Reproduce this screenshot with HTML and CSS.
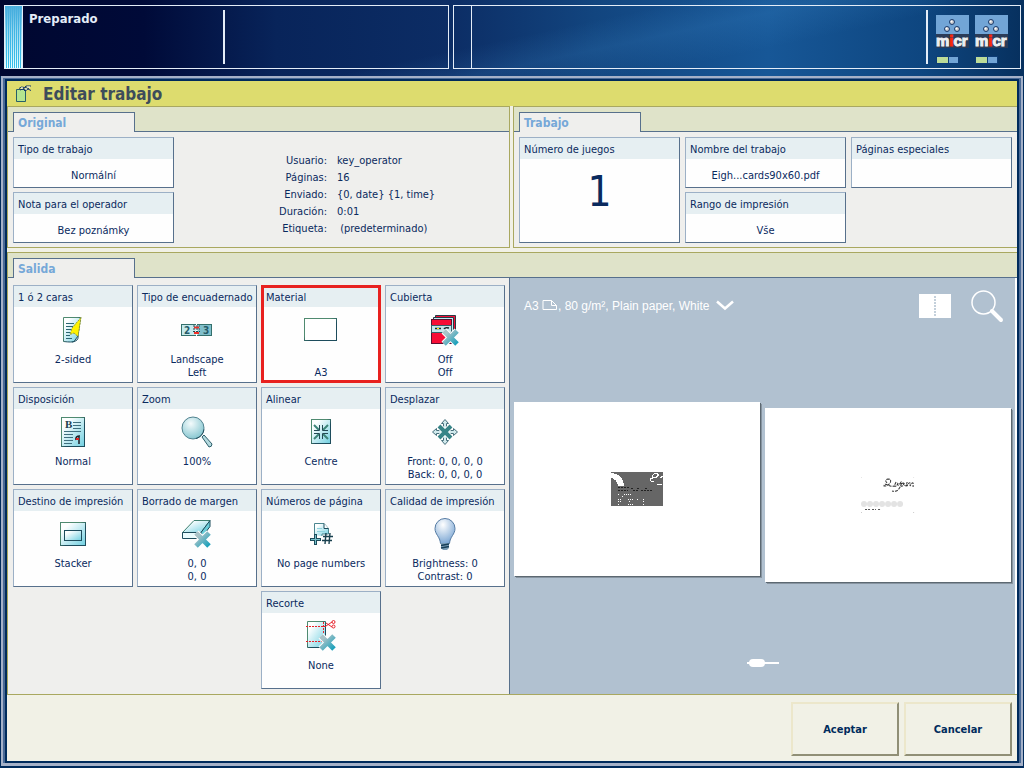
FILE: index.html
```html
<!DOCTYPE html>
<html lang="es">
<head>
<meta charset="utf-8">
<title>Editar trabajo</title>
<meta name="viewport" content="width=device-width, initial-scale=1">
<link rel="stylesheet" href="styles.css">
</head>
<body>
<svg class="defs" width="0" height="0" aria-hidden="true">
  <defs>
    <linearGradient id="paper" x1="0" y1="0" x2="1" y2="1"><stop offset="0.2" stop-color="#fdffff"/><stop offset="1" stop-color="#6fcfe0"/></linearGradient>
    <linearGradient id="cross" x1="0" y1="0" x2="1" y2="1"><stop offset="0.2" stop-color="#a9c3c8"/><stop offset="1" stop-color="#16a0bb"/></linearGradient>
    <linearGradient id="edge" x1="0" y1="0" x2="1" y2="1"><stop offset="0.4" stop-color="#4f8a70"/><stop offset="0.6" stop-color="#1d4c5c"/></linearGradient>
    <radialGradient id="lens" cx="0.4" cy="0.3" r="0.8"><stop offset="0" stop-color="#f4fbfc"/><stop offset="1" stop-color="#79c0cb"/></radialGradient>
    <radialGradient id="bulb" cx="0.4" cy="0.25" r="0.8"><stop offset="0" stop-color="#ffffff"/><stop offset="1" stop-color="#76a3d2"/></radialGradient>
    <g id="x-mark">
      <path d="M2 2L15 15M15 2L2 15" stroke="#fff" stroke-width="7"/>
      <path d="M2 2L15 15M15 2L2 15" stroke="url(#cross)" stroke-width="5"/>
    </g>
    <g id="dots">
      <g fill="#c6c8cc" stroke="#17396c"><circle cx="16" cy="7" r="2.5"/><circle cx="11" cy="14" r="2.5"/><circle cx="21" cy="14" r="2.5"/></g>
      <g fill="#fff"><circle cx="15.5" cy="6.5" r="1"/><circle cx="10.5" cy="13.5" r="1"/><circle cx="20.5" cy="13.5" r="1"/></g>
    </g>
  </defs>
</svg>

<header class="status">
  <section class="status-box status-main">
    <span class="stripes"></span>
    <p class="state">Preparado</p>
    <span class="divider"></span>
  </section>
  <section class="status-box status-info">
    <span class="rail"></span>
    <span class="divider"></span>
    <div class="toners">
      <div class="toner">
        <svg width="33" height="19" viewBox="0 0 33 19" aria-hidden="true"><use href="#dots"/></svg>
        <span class="toner-name">m<b>i</b>cr</span>
        <span class="level"></span>
      </div>
      <div class="toner">
        <svg width="33" height="19" viewBox="0 0 33 19" aria-hidden="true"><use href="#dots"/></svg>
        <span class="toner-name">m<b>i</b>cr</span>
        <span class="level"></span>
      </div>
    </div>
  </section>
</header>

<main class="window">
  <div class="window-inner">
    <div class="titlebar">
      <svg width="18" height="18" viewBox="0 0 18 18" aria-hidden="true">
        <path d="M1.5 4.5h9v12h-9z" fill="#b5e58f" stroke="#265f69"/>
        <path d="M4 3.500l2.500-1.500 3 .5 1.500-1.500h5M5 5l3-1 2 2 3-2 3 1.500M8 4l2-1.500 4 1" fill="none" stroke="#12356b"/>
        <path d="M6 3h2M10 4h2M12 2h3" stroke="#fff"/>
      </svg>
      <h1>Editar trabajo</h1>
    </div>

    <div class="top-row">
      <section class="panel">
        <div class="tabbar"><h2 class="tab">Original</h2></div>
        <div class="panel-body original">
          <div class="stack">
            <button class="tile"><span class="tile-head">Tipo de trabajo</span><span class="tile-value">Normální</span></button>
            <button class="tile"><span class="tile-head">Nota para el operador</span><span class="tile-value">Bez poznámky</span></button>
          </div>
          <dl class="info">
            <dt>Usuario:</dt><dd>key_operator</dd>
            <dt>Páginas:</dt><dd>16</dd>
            <dt>Enviado:</dt><dd>{0, date} {1, time}</dd>
            <dt>Duración:</dt><dd>0:01</dd>
            <dt>Etiqueta:</dt><dd>&nbsp;(predeterminado)</dd>
          </dl>
        </div>
      </section>
      <section class="panel">
        <div class="tabbar"><h2 class="tab">Trabajo</h2></div>
        <div class="panel-body job">
          <button class="tile tile-count"><span class="tile-head">Número de juegos</span><span class="count">1</span></button>
          <button class="tile"><span class="tile-head">Nombre del trabajo</span><span class="tile-value">Eigh...cards90x60.pdf</span></button>
          <button class="tile"><span class="tile-head">Páginas especiales</span></button>
          <button class="tile"><span class="tile-head">Rango de impresión</span><span class="tile-value">Vše</span></button>
        </div>
      </section>
    </div>

    <section class="panel output">
      <div class="tabbar"><h2 class="tab">Salida</h2></div>
      <div class="output-body">
        <div class="options">
          <button class="tile option"><span class="tile-head">1 ó 2 caras</span>
            <span class="icon"><svg width="22" height="28" viewBox="0 0 22 28">
              <path d="M1.500 1.500H18.500L16 20l-4 5.500q-2 1-10.500 0z" fill="url(#paper)" stroke="url(#edge)"/>
              <path d="M4 7.500h8M4 10.500h7M4 13.500h6M4 16.500h4M4 19.500h4M4 22.500h6" stroke="#2b6571"/>
              <path d="M19 1.500L10 12l-2 6.500 4-1.500 4 3.500z" fill="#fff200" stroke="#8d9a3c" stroke-dasharray="2 1"/>
              <path d="M16 20q1 5-6 6" fill="none" stroke="#1c5060"/></svg></span>
            <span class="text">2-sided</span></button>
          <button class="tile option"><span class="tile-head">Tipo de encuadernado</span>
            <span class="icon"><svg width="32" height="14" viewBox="0 0 32 14">
              <rect x="0.500" y="1.500" width="30" height="11" fill="#c4e9ec" stroke="#34706c"/><rect x="17" y="2" width="13" height="10" fill="#80bfcb"/>
              <path d="M15.500 0v14" stroke="#fff"/>
              <path d="M13 4.500h5M13 10h5" stroke="#f03028" stroke-width="2"/><path d="M12 3h7M12 6h7M12 8.500h7" stroke="#28444c" stroke-dasharray="2 1"/>
              <text class="spine-no" x="3" y="11">2</text><text class="spine-no" x="22" y="11">3</text></svg></span>
            <span class="text">Landscape<br>Left</span></button>
          <button class="tile option selected"><span class="tile-head">Material</span>
            <span class="icon"><svg width="34" height="24" viewBox="0 0 34 24"><rect x="0.500" y="0.500" width="32" height="22" fill="#fff" stroke="url(#edge)"/></svg></span>
            <span class="text"><br>A3</span></button>
          <button class="tile option"><span class="tile-head">Cubierta</span>
            <span class="icon"><svg width="30" height="32" viewBox="0 0 30 32">
              <path d="M5.500 4V1.500H25.500V22" fill="#f70d36" stroke="#253c46"/>
              <path d="M3.500 6V3.500H23.500V24H4" fill="#bfeaf0" stroke="#253c46"/>
              <rect x="1.500" y="5.500" width="20" height="24" fill="#f70d36" stroke="#5b1030"/>
              <rect x="1.500" y="11.500" width="20" height="7" fill="#c7e7ec" stroke="#34616a"/>
              <path d="M5 14.500h6M14 15q1-2 5-1" fill="none" stroke="#16242b" stroke-width="1.500"/><rect x="7" y="14" width="2" height="1" fill="#fff200"/>
              <use href="#x-mark" x="12" y="15"/></svg></span>
            <span class="text">Off<br>Off</span></button>

          <button class="tile option"><span class="tile-head">Disposición</span>
            <span class="icon"><svg width="26" height="32" viewBox="0 0 26 32">
              <rect x="1.500" y="1.500" width="23" height="29" fill="url(#paper)" stroke="url(#edge)"/>
              <text class="serif-b" x="5" y="12">B</text>
              <path d="M13 6.500h8M13 9.500h8M13 12.500h8M4 15.500h17M4 18.500h9M4 21.500h9M4 24.500h9M4 27.500h8" stroke="#3f6f7e"/>
              <path d="M16 24q-1-4 4-4M19 28v-7" fill="none" stroke="#1d1d24" stroke-width="1.500"/><path d="M16 22h3v2h-3z" fill="#e32020"/></svg></span>
            <span class="text">Normal</span></button>
          <button class="tile option"><span class="tile-head">Zoom</span>
            <span class="icon"><svg width="32" height="34" viewBox="0 0 32 34">
              <path d="M21 22l2-2 8 9q0 3-3 3z" fill="#b4d9de" stroke="#2d5f6b"/>
              <circle cx="12" cy="13" r="11" fill="url(#lens)" stroke="#51828f"/><path d="M15 23.500a11 11 0 0 0 8-9" fill="none" stroke="#24505e"/></svg></span>
            <span class="text">100%</span></button>
          <button class="tile option"><span class="tile-head">Alinear</span>
            <span class="icon"><svg width="22" height="28" viewBox="0 0 22 28">
              <rect x="1.500" y="1.500" width="19" height="24" fill="url(#paper)" stroke="url(#edge)"/>
              <path d="M4 7l5 5M18 7l-5 5M4 21l5-5M18 21l-5-5" stroke="#3d8579" stroke-width="2"/>
              <path d="M9.500 7v5.500H4M12.500 7v5.500H18M9.500 21v-5.500H4M12.500 21v-5.500H18" fill="none" stroke="#244a55"/></svg></span>
            <span class="text">Centre</span></button>
          <button class="tile option"><span class="tile-head">Desplazar</span>
            <span class="icon"><svg width="28" height="28" viewBox="0 0 28 28">
              <path d="M12.500 10V5.500H10.500L14 1.500l3.500 4H15.500V10M12.500 18v4.500H10.500L14 26.500l3.500-4H15.500V18M10 12.500H5.500V10.500L1.500 14l4 3.500V15.500H10M18 12.500h4.500V10.500L26.500 14l-4 3.500V15.500H18" fill="#d2eaed" stroke="#47707c"/>
              <path d="M8 8l12 12M20 8L8 20" stroke="#fff" stroke-width="6"/><path d="M8 8l12 12M20 8L8 20" stroke="#378487" stroke-width="4"/></svg></span>
            <span class="text">Front: 0, 0, 0, 0<br>Back: 0, 0, 0, 0</span></button>

          <button class="tile option"><span class="tile-head">Destino de impresión</span>
            <span class="icon"><svg width="28" height="26" viewBox="0 0 28 26">
              <rect x="1.500" y="1.500" width="25" height="23" fill="url(#paper)" stroke="url(#edge)"/>
              <rect x="5.500" y="9.500" width="17" height="10" fill="url(#paper)" stroke="#1d4c5c"/></svg></span>
            <span class="text">Stacker</span></button>
          <button class="tile option"><span class="tile-head">Borrado de margen</span>
            <span class="icon"><svg width="32" height="30" viewBox="0 0 32 30">
              <path d="M1.500 13.500L13 1.500h16L20 13.500z" fill="url(#paper)" stroke="#3f8070"/>
              <path d="M20 13.500l9-12v6l-9 12z" fill="#69cdd9" stroke="#1d4c5c"/>
              <path d="M1.500 13.500H20v6H1.500z" fill="#e9fbfd" stroke="#1d4c5c"/>
              <use href="#x-mark" x="13" y="12"/></svg></span>
            <span class="text">0, 0<br>0, 0</span></button>
          <button class="tile option"><span class="tile-head">Números de página</span>
            <span class="icon"><svg width="24" height="24" viewBox="0 0 24 24">
              <path d="M5.500 13V1.500H15l4.500 5V12H13v2" fill="url(#paper)" stroke="#4b8690"/><path d="M15 1.500v5h4.500" fill="#fff" stroke="#1d4c5c"/><path d="M8 6.500h5M8 9.500h8" stroke="#8fd3de"/>
              <path d="M1 17.500h11M6.500 12v11" stroke="#1d4c5c" stroke-width="3"/><path d="M2 17.500h9M6.500 13v9" stroke="#74bfc9"/>
              <path d="M17 11l-1 11M21 11l-1 11M14 14.500h10M13 18.500h10" stroke="#19414f" stroke-width="1.400"/></svg></span>
            <span class="text">No page numbers</span></button>
          <button class="tile option"><span class="tile-head">Calidad de impresión</span>
            <span class="icon"><svg width="22" height="32" viewBox="0 0 22 32">
              <path d="M11 .5a10 10 0 0 1 10 10c0 6-5 8-5.500 15h-9C6 18.500 1 16.500 1 10.500A10 10 0 0 1 11 .5z" fill="url(#bulb)" stroke="#557ba3"/>
              <path d="M7 25h8v5l-2 2H9l-2-2z" fill="#7b9db6"/><path d="M7 27.500l8-1.500M7 30l8-1.500" stroke="#173f58" stroke-width="1.300"/></svg></span>
            <span class="text">Brightness: 0<br>Contrast: 0</span></button>

          <button class="tile option trim"><span class="tile-head">Recorte</span>
            <span class="icon"><svg width="32" height="32" viewBox="0 0 32 32">
              <path d="M2.500 27.500v-26H20.500v26z" fill="url(#paper)" stroke="url(#edge)"/>
              <path d="M1 6.500h20M1 21.500h16M18.500 2v12" stroke="#e8212a" stroke-dasharray="2 1"/>
              <path d="M21 6l6-4M21 3l6 4" stroke="#e8212a"/><g fill="none" stroke="#e8212a"><circle cx="28.500" cy="2" r="1.500"/><circle cx="28.500" cy="6.500" r="1.500"/></g>
              <use href="#x-mark" x="14" y="14"/></svg></span>
            <span class="text">None</span></button>
        </div>

        <div class="preview">
          <div class="preview-bar">
            <button class="media">A3 <svg width="16" height="12" viewBox="0 0 16 12"><path d="M1 1.500h8.500l5 5v4H1zM9.500 1.500v5h5" fill="none" stroke="#fff"/></svg>, 80 g/m², Plain paper, White <svg class="chevron" width="18" height="11" viewBox="0 0 18 11"><path d="M1 1.500l8 7 8-7" fill="none" stroke="#fff" stroke-width="2.500"/></svg></button>
            <button class="tool" aria-label="Vista de pliego"><svg width="32" height="24" viewBox="0 0 32 24"><path d="M0 0h32v24H0z" fill="#fff"/><path d="M16 2v20" stroke="#b1c1d0" stroke-width="1.500" stroke-dasharray="2 1"/></svg></button>
            <button class="tool" aria-label="Ampliar"><svg width="34" height="34" viewBox="0 0 34 34"><circle cx="13.500" cy="13.500" r="11.500" fill="none" stroke="#fff" stroke-width="1.500"/><path d="M22 22l9 9" stroke="#fff" stroke-width="4" stroke-linecap="round"/></svg></button>
          </div>
          <div class="sheets">
            <div class="sheet">
              <svg class="card-art" viewBox="0 0 54 36" shape-rendering="crispEdges" aria-hidden="true">
                <path d="M1 1h52v34H1z" fill="#666"/>
                <path d="M1 2q12 1 13 13H8Q7 8 1 7z" fill="#fff"/>
                <path d="M8 16h12M8 19h10M23 19h6M31 19h12M21 17h2M27 17h2M35 17h2" stroke="#222" stroke-dasharray="2 1"/>
                <path d="M8 23h2M14 23h7M12 25h1M8 28h3M18 28h5M27 28h1M33 28h1M8 30h3M19 30h1M33 30h1M8 33h2M18 33h6M33 33h2" stroke="#fff" stroke-dasharray="1 1"/>
                <path d="M49 3q-3 6-7 3 1-5 6-3 0 3-8 5 0 3 4 2M50 7l3-2M47 13h5" fill="none" stroke="#fff"/>
              </svg>
            </div>
            <div class="sheet sheet-low">
              <svg class="card-art" viewBox="0 0 54 36" aria-hidden="true">
                <g fill="#e3e3e3"><circle cx="3" cy="27" r="3"/><circle cx="9" cy="27" r="3"/><circle cx="15" cy="27" r="3"/><circle cx="21" cy="27" r="3"/><circle cx="27" cy="27" r="3"/><circle cx="33" cy="27" r="3"/><circle cx="39" cy="27" r="3"/></g>
                <path d="M4 32.500h5M11 32.500h4M17 32.500h2" stroke="#555" stroke-dasharray="2 1"/>
                <path d="M26 6q-3-3 1-4 4 0 2 4-2 3-6 3 0-3 4-1 3 2 6 1M35 5l-2 4q2 1 4-3M37 6q-1 3 1 2l2-3q1 3-3 8-3 2-6 1M43 6q-4 0-3 3 2 1 3-3 0 3 2 3l1-4v4q2-4 3-3v3q2-4 3-3v4" fill="none" stroke="#333" stroke-dasharray="3 1"/>
                <path d="M0 0h1M52 0h1M0 35.500h1M52 35.500h1" stroke="#ccc"/>
              </svg>
            </div>
          </div>
          <input class="pager" type="range" min="0" max="100" value="18" aria-label="Página">
        </div>
      </div>
    </section>

    <footer class="actions">
      <button class="action">Aceptar</button>
      <button class="action">Cancelar</button>
    </footer>
  </div>
</main>
</body>
</html>
```

FILE: styles.css
```css
* { box-sizing: border-box; }

body {
  margin: 0;
  min-height: 100vh;
  display: flex;
  flex-direction: column;
  background: #002b5c;
  color: #0a2a5e;
  font: 11px/13px "DejaVu Sans Condensed", "Noto Sans", sans-serif;
}

h1, h2, p, dl, dd { margin: 0; }

button { font: inherit; color: inherit; padding: 0; margin: 0; background: none; border: 0; cursor: pointer; }

svg { display: block; fill: none; }

.defs { position: absolute; }

/* Machine status */
.status {
  display: flex;
  gap: 4px;
  height: 76px;
  padding: 5px 3px 7px 4px;
  background:
    linear-gradient(168deg, transparent 50%, rgba(70, 150, 215, 0.16) 60%, transparent 72%),
    linear-gradient(90deg, #000730 0%, #000a38 14%, #08245a 27%, #0c2d65 44%, #12457f 58%, #175797 75%, #0e4680 90%, #07305e 100%);
}

.status-box { display: flex; border: 1px solid #e4edf8; }

.status-main { flex: 445; }

.status-info { flex: 568; }

.stripes {
  width: 18px;
  border-right: 1px solid #e4edf8;
  background:
    linear-gradient(#4aaede, rgba(74, 174, 222, 0.5) 40%, transparent),
    repeating-linear-gradient(90deg, #e8ffff 0 1px, #35bdea 1px 2px);
}

.state {
  flex: 0 0 200px;
  padding: 5px 0 0 6px;
  color: #e4edf8;
  font-size: 13px;
  line-height: 16px;
  font-weight: bold;
}

.divider { width: 2px; margin: 4px 0; background: #e4edf8; }

.rail { width: 18px; margin-right: auto; border-right: 1px solid #e4edf8; }

.toners { display: flex; gap: 6px; padding: 9px 12px 0 8px; }

.toner { width: 33px; }

.toner > svg { background: #72a5d6; }

.toner-name {
  display: block;
  background: #2b3c58;
  color: #eceef0;
  font: bold 15px/14px "Liberation Sans", Arial, sans-serif;
  -webkit-text-stroke: 1px;
}

.toner-name b { color: #f8280c; }

.level {
  display: block;
  width: 23px;
  height: 8px;
  margin-top: 8px;
  border: 1px solid #0d3c76;
  background: linear-gradient(90deg, #bcdc98 0 11px, #0d3c76 11px 12px, #72a5d6 12px);
}

/* Window frame */
.window {
  flex: 1;
  display: flex;
  margin: 0 1px 2px;
  padding: 1px 2px 0;
  border: solid #a5b1c8;
  border-width: 2px 2px 3px;
  background: #4a6a96;
}

.window-inner {
  flex: 1;
  display: flex;
  flex-direction: column;
  border: 2px solid #002b5c;
  background: #f1f1e6;
}

.titlebar {
  display: flex;
  align-items: center;
  gap: 10px;
  height: 25px;
  padding-left: 8px;
  background: #dddc6e;
}

.titlebar h1 { color: #3d4c5b; font-size: 17px; line-height: 24px; }

.top-row { display: flex; gap: 3px; margin-bottom: 4px; }

.top-row .panel { flex: 1 1 0; }

.panel { border: 1px solid #a9a860; background: #efefed; }

.top-row .panel + .panel { border-right: 0; }

.tabbar {
  height: 25px;
  padding: 5px 5px 0;
  background: #dfe3c9;
  border-bottom: 1px solid #57708c;
}

.tab {
  width: 122px;
  height: 20px;
  padding: 2px 4px;
  border: 1px solid #57708c;
  border-bottom: 0;
  background: #efefed;
  color: #76a8d8;
  font-size: 12px;
  line-height: 16px;
}

.panel-body { padding: 5px 5px 4px; }

.original { display: flex; gap: 109px; }

.stack { flex: 0 0 161px; display: grid; gap: 4px; }

.job {
  display: grid;
  grid-template-columns: repeat(3, 161px);
  grid-template-rows: 51px 51px;
  gap: 4px 5px;
}

.tile {
  display: flex;
  flex-direction: column;
  height: 51px;
  border: 1px solid;
  border-color: #9cb0c6 #57708c #57708c #9cb0c6;
  background: #fefefe;
}

.tile-head {
  flex: 0 0 21px;
  width: 100%;
  padding: 0 4px;
  background: #e6eff2;
  line-height: 23px;
  height: 21px;
  min-height: 0;
  text-align: left;
  white-space: nowrap;
}

.tile-value { width: 100%; padding-top: 10px; }

.tile-count { grid-row: span 2; height: auto; }

.count { width: 100%; padding-top: 12px; font-size: 42px; line-height: 42px; }

.info {
  display: grid;
  grid-template-columns: 44px 1fr;
  grid-auto-rows: 17px;
  column-gap: 10px;
  padding-top: 15px;
  line-height: 17px;
  white-space: nowrap;
}

.info dt { justify-self: end; }

/* Output settings */
.output { flex: 1; display: flex; flex-direction: column; border-right: 0; }

.output-body { flex: 1; display: flex; }

.options {
  display: grid;
  grid-template-columns: repeat(4, 120px);
  grid-auto-rows: 98px;
  gap: 4px;
  padding: 7px 4px 5px 5px;
}

.option { height: 98px; align-items: center; }

.icon { height: 36px; margin-top: 5px; display: flex; align-items: center; }

.text { margin-top: 5px; }

.trim { grid-column: 3; }

.selected { outline: 3px solid #e8211f; outline-offset: -3px; }

.spine-no { font: bold 10px "DejaVu Sans Condensed", sans-serif; fill: #255a68; }

.serif-b { font: bold 11px "Liberation Serif", serif; fill: #24404e; }

/* Sheet preview */
.preview {
  flex: 1;
  display: flex;
  flex-direction: column;
  border-left: 1px solid #57708c;
  border-right: 2px solid #fff;
  background: #b1c1d0;
}

.preview-bar {
  display: flex;
  align-items: center;
  gap: 19px;
  height: 56px;
  padding: 0 11px 0 14px;
}

.media {
  margin-right: auto;
  color: #fff;
  font: 12px/16px "Liberation Sans", Arial, sans-serif;
  white-space: nowrap;
}

.media svg { display: inline-block; vertical-align: -1px; }

.media .chevron { margin-left: 3px; }

.sheets {
  display: flex;
  align-items: flex-start;
  gap: 5px;
  padding: 68px 4px 0;
}

.sheet {
  flex: 1;
  display: flex;
  align-items: center;
  justify-content: center;
  aspect-ratio: 246 / 174;
  background: #fff;
  box-shadow: 1px 1px #5c6871, 2px 2px #8794a0;
}

.sheet-low { margin-top: 6px; }

.card-art { width: 22%; }

.pager {
  appearance: none;
  width: 32px;
  height: 8px;
  margin: auto auto 27px;
  background: linear-gradient(#fff, #fff) center / 100% 2px no-repeat;
}

.pager::-webkit-slider-thumb {
  appearance: none;
  width: 16px;
  height: 8px;
  border-radius: 4px;
  background: #fff;
}

/* Dialog actions */
.actions {
  display: flex;
  justify-content: flex-end;
  gap: 5px;
  padding: 7px 5px 5px;
}

.action {
  width: 108px;
  height: 54px;
  border: 2px solid;
  border-color: #ece7cb #908f76 #908f76 #ece7cb;
  font-weight: bold;
  color: #002b5c;
}
```
